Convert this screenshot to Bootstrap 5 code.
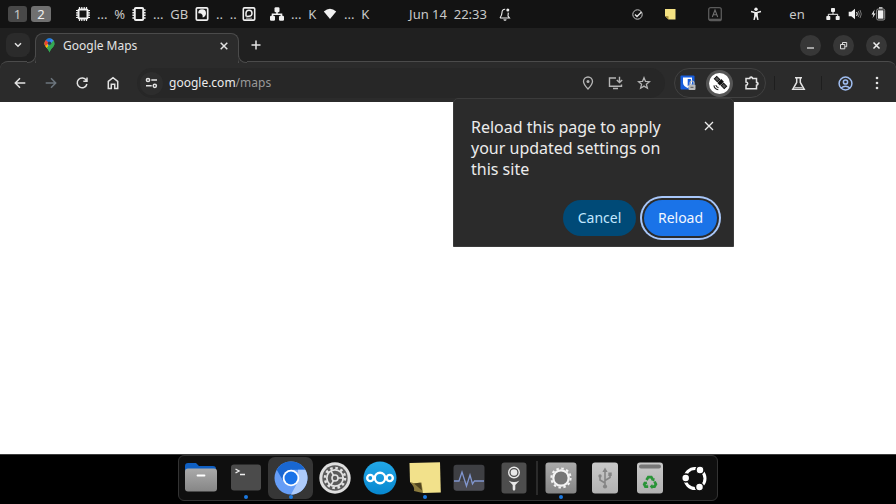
<!DOCTYPE html>
<html lang="en">
<head>
<meta charset="utf-8">
<meta name="viewport" content="width=device-width, initial-scale=1">
<title>Google Maps</title>
<link href="https://cdn.jsdelivr.net/npm/bootstrap@5.3.0/dist/css/bootstrap.min.css" rel="stylesheet">
<style>
  body { font-family: "Noto Sans", "Open Sans", sans-serif; font-size: 12px; line-height: 16px; background: #000; color: #e3e3e3; }
  svg { display: block; flex: none; }
  button { color: inherit; }
  .bare { border: 0; background: none; padding: 0; display: flex; align-items: center; justify-content: center; flex: none; }
  .ln { fill: none; stroke: currentColor; stroke-width: 1.5; }

  .sysbar { height: 28px; background: #131313; color: #c9c9c9; padding: 0 8px; flex: none; font-size: 13px; }
  .side { flex: 1 1 0; min-width: 0; }
  .wspace { width: 19px; height: 16px; border-radius: 3px; background: #484848; }
  .wspace.current { width: 20px; background: #707070; color: #f0f0f0; }
  .meter { gap: 7px; color: #c9c9c9; white-space: pre; }
  .meter svg, .tray svg { color: #f0f0f0; }
  .clock { white-space: pre; }
  .m-cpu { width: 56px; margin-left: 25px; } .m-mem { width: 63px; } .m-disk { width: 47px; }
  .m-opt { width: 28px; } .m-net { width: 53px; }
  .c18 { width: 18px; } .c20 { width: 20px; } .c26 { width: 26px; } .c28 { width: 28px; }
  .c30 { width: 30px; } .c36 { width: 36px; } .c54 { width: 54px; }

  .tabstrip { height: 34px; background: #202020; padding: 5px 9px 0 6px; flex: none; }
  .tabsearch { width: 24px; height: 24px; border-radius: 8px; background: #2b2b2b; }
  .page-tab { width: 204px; height: 30px; margin-left: 5px; padding: 0 8px 6px 8px; background: #2b2b2b; border: 1px solid #4b4b4b; border-bottom: 0; border-radius: 8px 8px 0 0; position: relative; z-index: 1; flex: none; }
  .page-tab::before, .page-tab::after { content: ""; position: absolute; bottom: 0; width: 9px; height: 9px; border-bottom: 1px solid #4b4b4b; background: #202020; box-shadow: 0 3px 0 #2b2b2b; clip-path: inset(0); }
  .page-tab::before { left: -9px; border-right: 1px solid #4b4b4b; border-bottom-right-radius: 8px; }
  .page-tab::after { right: -9px; border-left: 1px solid #4b4b4b; border-bottom-left-radius: 8px; }
  .newtab { width: 24px; height: 24px; margin-left: 5px; }
  .winctl { gap: 12px; padding-top: 2px; }
  .wbtn { width: 21px; height: 21px; border-radius: 50%; background: #373737; }

  .strip-back { background: #202020; flex: none; }
  .toolbar { height: 41px; margin-top: -1px; background: #2b2b2b; border: 1px solid #4b4b4b; border-width: 1px 0 0; border-radius: 8px 8px 0 0; padding: 2px 10px 0 4px; }
  .nav31 { width: 31px; height: 30px; }
  .nav46 { width: 46px; height: 30px; }
  .omni { height: 30px; border-radius: 15px; background: #272727; margin: 0 9px; padding: 0 7px 0 3px; min-width: 0; }
  .siteinfo { width: 23px; height: 23px; border-radius: 50%; background: #2d2d2d; }
  .act { width: 28px; height: 28px; color: #b5b5b5; }
  .url { font-size: 12px; color: #999; margin-left: 6px; }
  .url b { color: #ececec; font-weight: 400; }
  .exts { height: 30px; width: 92px; border-radius: 15px; border: 1px solid #414141; flex: none; }
  .ext-on { width: 27px; height: 27px; border-radius: 50%; background: #555; }
  .vbar { width: 1px; height: 14px; background: #1e1e1e; }

  .prompt { position: absolute; top: 98px; right: 162px; width: 281px; z-index: 5; background: #2b2b2b; border: 1px solid #3b3b3b; border-radius: 5px 5px 0 0; padding: 18px 16px 10px 17px; color: #ececec; }
  .prompt h1 { font-size: 16px; line-height: 21px; font-weight: 400; margin: 0 0 20px; }
  .dismiss { padding: 3px 2px 0; }
  .pill { height: 36px; border: 0; border-radius: 18px; font-size: 14px; font-weight: 400; padding: 0; width: 73px; }
  .pill-no { background: #004a77; color: #c2e7ff; }
  .pill-go { background: #1a73e8; color: #f3f7ff; box-shadow: 0 0 0 2px #2b2b2b, 0 0 0 4px #a8c7fa; }

  .site { background: #fff; border-bottom: 1px solid #3d3d3d; min-height: 0; }
  .dock { height: 46px; width: 100%; max-width: 540px; margin: 0 auto 3px; background: #0f0f0f; border: 1px solid #333; border-radius: 6px; }
  .dock-app { flex: 1 1 0; height: 42px; position: relative; border-radius: 7px; }
  .dock-app.front { background: #363636; }
  .dock-app.open::after { content: ""; position: absolute; bottom: 0; left: 50%; margin-left: -2px; width: 4px; height: 4px; border-radius: 50%; background: #1a78e0; }
  .dock-sep { width: 2px; height: 34px; background: #2b2b2b; }
</style>
<script src="https://cdn.jsdelivr.net/npm/bootstrap@5.3.0/dist/js/bootstrap.bundle.min.js"></script>
</head>
<body class="vh-100 d-flex flex-column overflow-hidden position-relative">

<header class="sysbar d-flex align-items-center">
  <div class="side d-flex align-items-center">
    <button class="bare wspace">1</button>
    <button class="bare wspace current ms-1 me-0">2</button>
    <div class="meter m-cpu d-flex align-items-center">
      <svg width="14" height="14" viewBox="0 0 14 14"><rect x="2.5" y="2.5" width="9" height="9" rx="1" fill="none" stroke="currentColor" stroke-width="2"/><path d="M3.5 0v2M5.8 0v2M8.2 0v2M10.5 0v2M3.5 12v2M5.8 12v2M8.2 12v2M10.5 12v2M0 3.5h2M0 5.8h2M0 8.2h2M0 10.5h2M12 3.5h2M12 5.8h2M12 8.2h2M12 10.5h2" stroke="currentColor" stroke-width="1.2"/></svg><span>...  %</span>
    </div>
    <div class="meter m-mem d-flex align-items-center">
      <svg width="14" height="14" viewBox="0 0 14 14"><rect x="2.8" y="1" width="8.4" height="12" rx="1" fill="none" stroke="currentColor" stroke-width="1.9"/><path d="M.4 3h2.4M.4 5.7h2.4M.4 8.3h2.4M.4 11h2.4M11.2 3h2.4M11.2 5.7h2.4M11.2 8.3h2.4M11.2 11h2.4" stroke="currentColor" stroke-width="1.5"/></svg><span>...  GB</span>
    </div>
    <div class="meter m-disk d-flex align-items-center">
      <svg width="14" height="14" viewBox="0 0 14 14"><rect x="1.3" y=".9" width="11.4" height="12.2" rx="1.2" fill="none" stroke="currentColor" stroke-width="1.7"/><path d="M3.2 6.200A3.900 3.900 0 0 1 11 6.200c0 2.400-1.400 3.800-3.300 4.200L7.500 8 6 6.500z" fill="currentColor"/></svg><span>..  ..</span>
    </div>
    <div class="meter m-opt d-flex align-items-center">
      <svg width="14" height="14" viewBox="0 0 14 14"><rect x="1.3" y=".9" width="11.4" height="12.2" rx="1.2" fill="none" stroke="currentColor" stroke-width="1.6"/><path d="M4 9.400V6a3 3 0 1 1 3 3.200L4.400 9.400" class="ln"/><path d="M4 11.200h6" stroke="currentColor" stroke-width=".7"/></svg>
    </div>
    <div class="meter m-net d-flex align-items-center">
      <svg width="14" height="14" viewBox="0 0 14 14"><rect x="4.5" y=".2" width="5" height="5" rx="1.200" fill="currentColor"/><rect x="0" y="8.800" width="5" height="5" rx="1.200" fill="currentColor"/><rect x="9" y="8.800" width="5" height="5" rx="1.200" fill="currentColor"/><path d="M7 4v3M2.500 9V7.200h9V9" fill="none" stroke="currentColor" stroke-width="1.6"/></svg><span>...  K</span>
    </div>
    <div class="meter d-flex align-items-center">
      <svg width="14" height="14" viewBox="0 0 14 14"><path d="M.8 4.4Q7-1 13.2 4.4L7 12z" fill="currentColor"/></svg><span>...  K</span>
    </div>
  </div>
  <time class="clock">Jun 14  22:33</time>
  <div class="side tray d-flex align-items-center">
    <button class="bare c36" aria-label="Notifications"><svg width="14" height="14" viewBox="0 0 14 14"><path d="M2 11h9.500L10 9l.3-3.400M7.200 2.300C5 2.200 4 3.800 4 5.400 4 8.200 3 9.600 2 11M6 12.300a1 1 0 0 0 2 0" fill="none" stroke="currentColor" stroke-width="1.1"/><circle cx="9.800" cy="3" r="1.500" fill="currentColor"/></svg></button>
    <button class="bare c30 ms-auto" aria-label="Tasks"><svg width="11" height="11" viewBox="0 0 11 11"><circle cx="5.500" cy="5.500" r="4.700" fill="none" stroke="#c4c4c4"/><path d="M3 5.500l2 2L9.500 3" fill="none" stroke="#e4e4e4" stroke-width="1.400"/></svg></button>
    <button class="bare c36" aria-label="Notes"><svg width="12" height="12" viewBox="0 0 12 12"><path d="M1 1h10.500v10.500H4.500L1 8z" fill="#f4e283"/><path d="M1 8l3.500.2v3.300z" fill="#a58d38"/></svg></button>
    <button class="bare c54" aria-label="Keyboard"><svg width="14" height="15" viewBox="0 0 14 15"><rect x=".7" y=".7" width="12.600" height="13" rx="2" fill="none" stroke="#5b5b5b" stroke-width="1.300"/><path d="M1 12.700h12" stroke="#5b5b5b" stroke-width="2"/><path d="M4.300 10L7 3l2.700 7M5.200 7.800h3.600" fill="none" stroke="#6f6f6f" stroke-width="1.100"/></svg></button>
    <button class="bare c28" aria-label="Accessibility"><svg width="12" height="14" viewBox="0 0 12 14"><circle cx="6" cy="2.300" r="1.700" fill="currentColor"/><path d="M1 4.600l3.800.8M11 4.600l-3.800.8" stroke="currentColor" stroke-width="1.500"/><path d="M4.200 5h3.600v3.500l.8 4.500H7.300L6.200 9.500h-.4L4.700 13H3.400l.8-4.500z" fill="currentColor"/></svg></button>
    <button class="bare c54">en</button>
    <button class="bare c18" aria-label="Wired network"><svg width="14" height="14" viewBox="0 0 14 14"><rect x="5" y="1" width="4" height="4" rx=".8" fill="currentColor"/><rect x=".3" y="9" width="4" height="4" rx=".8" fill="currentColor"/><rect x="9.700" y="9" width="4" height="4" rx=".8" fill="currentColor"/><path d="M7 5v2.300M2.300 9V7.300h9.400V9" fill="none" stroke="currentColor" stroke-width="1"/></svg></button>
    <button class="bare c26" aria-label="Volume"><svg width="14" height="14" viewBox="0 0 14 14"><path d="M.7 4.800h2.600L7 1.700v10.600L3.300 9.200H.7z" fill="currentColor"/><path d="M8.600 5q1.300 2 0 4" fill="none" stroke="currentColor"/><path d="M10.300 4q2 3 0 6M12 3q2.600 4 0 8" fill="none" stroke="#777"/></svg></button>
    <button class="bare c20" aria-label="Battery"><svg width="15" height="14" viewBox="0 0 15 14"><path d="M3.600 2.500L.5 7.600h1.900L1.600 11l3-4.600H2.700z" fill="currentColor"/><path d="M8 1h3.500" stroke="currentColor" stroke-width="1.500"/><rect x="5.700" y="2" width="8" height="11" rx="1.500" fill="none" stroke="#999"/><rect x="7" y="3.300" width="5.400" height="8.400" fill="currentColor"/></svg></button>
  </div>
</header>

<div class="tabstrip d-flex align-items-start">
  <button class="bare tabsearch" aria-label="Search tabs"><svg width="10" height="10" viewBox="0 0 10 10"><path d="M2 3.300l3 3 3-3" class="ln"/></svg></button>
  <div class="page-tab d-flex align-items-center">
    <svg width="11" height="15" viewBox="0 0 11 15"><clipPath id="drop"><path d="M5.500.5A5 5 0 0 1 10.500 5.500C10.500 9 6.800 10 5.500 14.500 4.200 10 .5 9 .5 5.500A5 5 0 0 1 5.500.5z"/></clipPath><g clip-path="url(#drop)"><path fill="#34a853" d="M0 0h11v15H0z"/><path fill="#fbbc04" d="M0 4l5.500 1.500L7 8l-4.500 4L0 9z"/><path fill="#4285f4" d="M3 0h8v2L4.500 9 3 4z"/><path fill="#1a73e8" d="M2 0h6L4 5 1.500 2.500z"/><path fill="#ea4335" d="M0 6V2.500L1.700 1.800 4.500 4.500 1.800 8z"/><path fill="#34a853" d="M10 2l1 5-5 8H4.500L2.500 10z"/></g><circle cx="5.500" cy="5.300" r="1.700" fill="#2b3a55"/></svg>
    <span class="ms-2 flex-grow-1 text-nowrap">Google Maps</span>
    <button class="bare" aria-label="Close tab"><svg width="12" height="12" viewBox="0 0 12 12"><path d="M2.700 2.700l6.600 6.600M9.300 2.700L2.700 9.300" class="ln"/></svg></button>
  </div>
  <button class="bare newtab" aria-label="New tab"><svg width="12" height="12" viewBox="0 0 12 12"><path d="M6 1.500v9M1.500 6h9" class="ln"/></svg></button>
  <div class="winctl ms-auto d-flex">
    <button class="bare wbtn" aria-label="Minimize"><svg width="9" height="9" viewBox="0 0 9 9"><path d="M1 7h7" stroke="#ddd" stroke-width="1.300"/></svg></button>
    <button class="bare wbtn" aria-label="Restore"><svg width="9" height="9" viewBox="0 0 9 9"><path d="M1.500 3.500h4.300v4.300H1.500zM3.500 3V1.500h4.200v4.200H6.200" fill="none" stroke="#ddd" stroke-width="1"/></svg></button>
    <button class="bare wbtn" aria-label="Close"><svg width="9" height="9" viewBox="0 0 9 9"><path d="M1.500 1.500l6 6M7.500 1.500l-6 6" stroke="#eee" stroke-width="1.500"/></svg></button>
  </div>
</div>

<div class="strip-back">
  <nav class="toolbar d-flex align-items-center">
    <button class="bare nav31" aria-label="Back"><svg width="14" height="14" viewBox="0 0 14 14"><path d="M12.300 7H2.500M7 2.300L2.300 7 7 11.700" class="ln"/></svg></button>
    <button class="bare nav31 text-secondary" aria-label="Forward"><svg width="14" height="14" viewBox="0 0 14 14"><path d="M1.700 7h9.800M7 2.300L11.700 7 7 11.700" class="ln"/></svg></button>
    <button class="bare nav31" aria-label="Reload page"><svg width="14" height="14" viewBox="0 0 14 14"><path d="M11.300 4.300A4.900 4.900 0 1 0 11.900 8M12 1.500v3.700H8.300" class="ln"/></svg></button>
    <button class="bare nav31" aria-label="Home"><svg width="14" height="14" viewBox="0 0 14 14"><path d="M2.300 5.300L7 1.700l4.700 3.600v7.200H8.700V8.300H5.300v4.200h-3z" class="ln"/></svg></button>
    <div class="omni flex-grow-1 d-flex align-items-center">
      <button class="bare siteinfo" aria-label="Site information"><svg width="13" height="12" viewBox="0 0 13 12"><circle cx="3" cy="3" r="1.600" class="ln"/><circle cx="9.800" cy="8.800" r="1.600" class="ln"/><path d="M6.300 3H12M1 8.800h5.700" class="ln"/></svg></button>
      <a href="#" class="url text-decoration-none flex-grow-1"><b>google.com</b>/maps</a>
      <button class="bare act" aria-label="Location"><svg width="12" height="14" viewBox="0 0 12 14"><path d="M6 13C3.200 10 1.500 7.700 1.500 5.500a4.500 4.500 0 0 1 9 0C10.500 7.700 8.800 10 6 13z" fill="none" stroke="currentColor" stroke-width="1.300"/><circle cx="6" cy="5.500" r="1.500" fill="currentColor"/></svg></button>
      <button class="bare act" aria-label="Install"><svg width="16" height="14" viewBox="0 0 16 14"><path d="M8 2H1.500v8.300h12V8.500M5 12.500h5M11.500.8v5.400M8.800 4l2.700 2.600L14.200 4" fill="none" stroke="currentColor" stroke-width="1.400"/></svg></button>
      <button class="bare act" aria-label="Bookmark"><svg width="14" height="14" viewBox="0 0 14 14"><path d="M7 1.700l1.500 3.700 4 .3-3.100 2.600 1 3.900L7 10.100l-3.400 2.100 1-3.900L1.500 5.700l4-.3z" fill="none" stroke="currentColor" stroke-width="1.300"/></svg></button>
    </div>
    <div class="exts d-flex align-items-center justify-content-around">
      <button class="bare" aria-label="Password manager"><svg width="16" height="16" viewBox="0 0 16 16"><rect x=".5" y=".5" width="14" height="14" rx="1" fill="#175ddc"/><path d="M3 2.500h9v5.300c0 2.700-2.300 4-4.500 5.200C5.300 11.800 3 10.500 3 7.800z" fill="#fff"/><path d="M7.700 4h3.200v3.500c0 1.800-1.500 2.800-3.200 3.700z" fill="#175ddc"/><rect x="8.500" y="9.500" width="7" height="5.500" rx="1" fill="#bdbdbd"/><path d="M10 9.500V8a2 2 0 0 1 4 0v1.500" fill="none" stroke="#bdbdbd" stroke-width="1.200"/><path d="M10.500 12.300h3" stroke="#555"/></svg></button>
      <button class="bare ext-on" aria-label="Location extension"><svg width="21" height="21" viewBox="0 0 21 21"><circle cx="10.500" cy="10.500" r="10.500" fill="#fff"/><g transform="rotate(45 11.500 9.500)"><path d="M5.500 9.500h12" stroke="#161616"/><rect x="4.500" y="7.800" width="4.300" height="3.400" fill="#555" stroke="#161616"/><rect x="9.700" y="6.500" width="3.600" height="5.600" fill="#111"/><rect x="14.200" y="7.800" width="4.300" height="3.400" fill="#555" stroke="#161616"/></g><path d="M6.800 12q.5 2.200 2.700 2.600M4.900 12.300q.6 3.800 4.400 4.400" fill="none" stroke="#222" stroke-width="1.100"/></svg></button>
      <button class="bare" aria-label="Extensions"><svg width="16" height="16" viewBox="0 0 16 16"><path d="M2 3.500h3.700a1.500 1.500 0 0 1 3 0h3.800v3.700a1.500 1.500 0 0 1 0 3v3.600H2v-3.600c2.300-.2 2.300-3 0-3.200z" class="ln"/><path d="M5.700 3.300a1.500 1.500 0 0 1 3 0zM12.700 7a1.500 1.500 0 0 1 0 3z" fill="currentColor"/></svg></button>
    </div>
    <span class="vbar ms-2"></span>
    <button class="bare nav46" aria-label="Experiments"><svg width="15" height="15" viewBox="0 0 15 15"><path d="M4 1.700h7M5.700 2v4.500L1.800 13.200h11.400L9.300 6.500V2" class="ln"/><path d="M3.500 11.500h8" stroke="currentColor" stroke-width=".8"/></svg></button>
    <span class="vbar"></span>
    <button class="bare nav46" aria-label="Profile"><svg width="15" height="15" viewBox="0 0 15 15"><g fill="none" stroke="#9fbdf0" stroke-width="1.500"><circle cx="7.500" cy="7.500" r="6.400"/><circle cx="7.500" cy="6" r="2.100"/><path d="M3 12q4.500-3.600 9 0"/></g></svg></button>
    <button class="bare c18" aria-label="Menu"><svg width="4" height="14" viewBox="0 0 4 14" fill="currentColor"><circle cx="2" cy="2" r="1.300"/><circle cx="2" cy="7" r="1.300"/><circle cx="2" cy="12" r="1.300"/></svg></button>
  </nav>
</div>

<section class="prompt" role="dialog" aria-labelledby="ask">
  <div class="d-flex justify-content-between align-items-start">
    <h1 id="ask">Reload this page to apply<br>your updated settings on<br>this site</h1>
    <button class="bare dismiss" aria-label="Dismiss"><svg width="12" height="12" viewBox="0 0 12 12"><path d="M2 2l8 8M10 2l-8 8" fill="none" stroke="currentColor" stroke-width="1.300"/></svg></button>
  </div>
  <div class="d-flex justify-content-end gap-2">
    <button class="pill pill-no">Cancel</button>
    <button class="pill pill-go">Reload</button>
  </div>
</section>

<main class="site flex-grow-1"></main>

<nav class="dock d-flex align-items-center" aria-label="Dock">
  <button class="bare dock-app" aria-label="Files"><svg width="34" height="34" viewBox="0 0 34 34"><defs><linearGradient id="gr" x2="0" y2="1"><stop stop-color="#aaa"/><stop offset="1" stop-color="#868686"/></linearGradient><linearGradient id="gl" x2="0" y2="1"><stop stop-color="#c9c9c9"/><stop offset="1" stop-color="#b2b2b2"/></linearGradient></defs><path d="M1 5a3 3 0 0 1 3-3h8l3 3h14a3 3 0 0 1 3 3v8H1z" fill="#0f5fc2"/><rect x="1" y="7.500" width="32" height="23" rx="3" fill="url(#gr)"/><path d="M13.500 14.500h7" stroke="#fff" stroke-width="1.800" stroke-linecap="round"/></svg></button>
  <button class="bare dock-app open" aria-label="Terminal"><svg width="34" height="34" viewBox="0 0 34 34"><rect x="2" y="3.500" width="30" height="26" rx="3" fill="#4b4b4b"/><path d="M6.500 8l3.500 2-3.500 2M11 13.500h5" fill="none" stroke="#eee" stroke-width="1.400"/></svg></button>
  <button class="bare dock-app front open" aria-label="Chromium"><svg width="34" height="34" viewBox="0 0 34 34"><circle cx="17" cy="17" r="16.500" fill="#669df6"/><path d="M2.700 8.800A16.500 16.500 0 0 1 31.300 8.800H17L9.500 20.500z" fill="#1967d2"/><path d="M31.300 8.800A16.500 16.500 0 0 1 17 33.500L24 20.500V8.800z" fill="#aecbfa"/><circle cx="17" cy="17" r="8.300" fill="#fff"/><circle cx="17" cy="17" r="6.500" fill="#1a73e8"/></svg></button>
  <button class="bare dock-app" aria-label="Settings"><svg width="34" height="34" viewBox="0 0 34 34"><circle cx="17" cy="17" r="15.700" fill="#dedede"/><circle cx="17" cy="17" r="12.700" fill="#5b5b5b"/><circle cx="17" cy="17" r="10" fill="none" stroke="#e2e2e2" stroke-width="2.500" stroke-dasharray="2.600 2.636"/><circle cx="17" cy="17" r="8.200" fill="none" stroke="#e2e2e2" stroke-width="1.800"/><circle cx="17" cy="17" r="3" fill="none" stroke="#e2e2e2" stroke-width="1.600"/><path d="M20 17h5M15.500 14.400L13 10M15.500 19.600L13 24" stroke="#e2e2e2" stroke-width="1.600"/></svg></button>
  <button class="bare dock-app" aria-label="Nextcloud"><svg width="34" height="34" viewBox="0 0 34 34"><defs><linearGradient id="nc" x2="0" y2="1"><stop stop-color="#22a8e8"/><stop offset="1" stop-color="#0787cf"/></linearGradient></defs><circle cx="17" cy="17" r="16.500" fill="url(#nc)"/><g fill="none" stroke="#fff" stroke-width="2.400"><circle cx="17" cy="17" r="5.200"/><circle cx="7.300" cy="17" r="3.100"/><circle cx="26.700" cy="17" r="3.100"/></g></svg></button>
  <button class="bare dock-app open" aria-label="Sticky notes"><svg width="34" height="34" viewBox="0 0 34 34"><path d="M1.500 2L32 1.200l.8 30.300L15 32 2 21z" fill="#f2e18b"/><path d="M2 21q6 2.500 11.500.5L15 32Q10 31 6 30q1-4-4-9z" fill="#8b7a3c"/><path d="M6 22.500l6.500-1 1.500 8z" fill="#4e431f"/></svg></button>
  <button class="bare dock-app" aria-label="System monitor"><svg width="34" height="34" viewBox="0 0 34 34"><rect x="1.500" y="3.700" width="31" height="26" rx="3" fill="#3e3f43"/><path d="M2 20h30v6.500a3 3 0 0 1-3 3H5a3 3 0 0 1-3-3z" fill="#4b4b52"/><path d="M2 20h5l3-9 4.500 14 3.500-11 2.500 9 2-3H32" fill="none" stroke="#8196cf" stroke-width="1.300"/></svg></button>
  <button class="bare dock-app" aria-label="Passwords"><svg width="34" height="34" viewBox="0 0 34 34"><rect x="4.500" y="1.500" width="25" height="31" rx="3" fill="#4d4d4d"/><circle cx="17" cy="11.500" r="5.300" fill="none" stroke="#e8e8e8" stroke-width="1.400"/><circle cx="17" cy="11.500" r="3.300" fill="#e8e8e8"/><path d="M11.500 19.500q5.500 3 11 0L18.300 24v4.500L17 30l-1.300-1.500V24z" fill="#e8e8e8"/></svg></button>
  <span class="dock-sep"></span>
  <button class="bare dock-app open" aria-label="Tweaks"><svg width="34" height="34" viewBox="0 0 34 34"><rect x="1.500" y="1.500" width="31" height="31" rx="3" fill="url(#gr)"/><circle cx="17" cy="17" r="7.700" fill="#777" stroke="#f4f4f4" stroke-width="2.200"/><circle cx="17" cy="17" r="9.600" fill="none" stroke="#f4f4f4" stroke-width="2" stroke-dasharray="2.500 2.526"/></svg></button>
  <button class="bare dock-app" aria-label="USB drive"><svg width="34" height="34" viewBox="0 0 34 34"><rect x="4" y="1.500" width="26" height="31" rx="3" fill="url(#gl)"/><g fill="none" stroke="#858585" stroke-width="1.600"><path d="M17 10v15M17 22l-5-3v-4M17 19.500l5-3V13"/></g><path d="M17 6.500l2.600 4.500h-5.200zM20.300 11.500h3.400v3.400h-3.400z" fill="#858585"/><circle cx="17" cy="25.500" r="2.100" fill="#858585"/><circle cx="12" cy="15" r="1.700" fill="#858585"/></svg></button>
  <button class="bare dock-app" aria-label="Trash"><svg width="34" height="34" viewBox="0 0 34 34"><rect x="4" y="1.500" width="26" height="31" rx="3" fill="url(#gl)"/><rect x="6" y="3.500" width="22" height="4" rx="2" fill="#777"/><g fill="none" stroke="#2a9438" stroke-width="2.700"><path d="M13.500 19l1.800-2.900h3l1.500 2.400M21.500 20.500l1.400 2.700-1.400 2.500H19M15.200 25.700h-2.800l-1.200-2.400 1.300-2.100"/></g><path d="M21.700 17l-.5 3.400-3.300-1.300zM19.300 23v5.200l-2.600-2.600zM10.300 21.300l3.300-.9.800 3.300z" fill="#2a9438"/></svg></button>
  <button class="bare dock-app" aria-label="Show applications"><svg width="34" height="34" viewBox="0 0 34 34"><circle cx="17" cy="17.500" r="10" fill="none" stroke="#fff" stroke-width="3"/><g fill="#fff" stroke="#0f0f0f" stroke-width="1.500"><circle cx="7.700" cy="17" r="4"/><circle cx="22" cy="9" r="4"/><circle cx="21.500" cy="26" r="4"/></g></svg></button>
</nav>
</body>
</html>
